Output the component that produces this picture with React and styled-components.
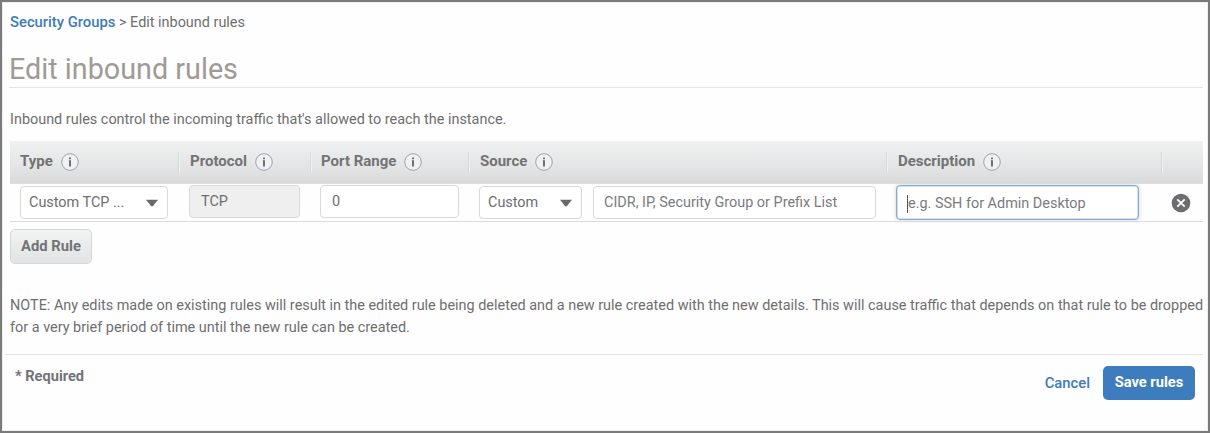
import React from "react";
import styled, { createGlobalStyle } from "styled-components";

const Global = createGlobalStyle`
  * { box-sizing: border-box; }
  body { margin: 0; background: #fff; }
`;

const Page = styled.main`
  width: 1210px;
  height: 433px;
  padding: 9px 5px 0 3px;
  border: 2px solid #7a7a7b;
  background: #fefefe;
  box-shadow: inset 0 0 0 1px #efefef;
  overflow: hidden;
  color: #6e6e70;
  font: 400 14.43px/21.5px Roboto, "Liberation Sans", sans-serif;
`;

const Section = styled.div`
  margin-left: 4px;
`;

const Breadcrumb = styled.nav`
  height: 21px;
  padding: 1px 0 0 1px;
  line-height: 21px;
`;

const Link = styled.a`
  color: #3d7bbb;
  font-size: 14.8px;
  font-weight: 500;
`;

const Title = styled.h1`
  height: 56px;
  margin: 0;
  padding: 17px 0 0 0;
  border-bottom: 1px solid #e4e4e4;
  color: #a09a95;
  font-size: 28.75px;
  font-weight: 400;
  line-height: 40px;
`;

const Intro = styled.p`
  height: 53px;
  margin: 0;
  padding: 21px 0 0 1px;
  white-space: nowrap;
`;

const Table = styled.div`
  margin-left: 1px;
`;

const Columns = styled.div`
  display: grid;
  grid-template-columns: 168px 132px 158px 418px 275px 1fr;
`;

const HeaderRow = styled(Columns)`
  height: 43px;
  align-items: center;
  background: linear-gradient(#eff0f0, #e5e6e7 55%, #dadada);
  border-bottom: 1px solid #dedede;
`;

const HeaderCell = styled.div`
  display: flex;
  align-items: center;
  gap: 8px;
  height: 20px;
  padding-left: ${(p) => p.$inset}px;
  border-left: ${(p) => (p.$first ? "0" : "1px solid #d6d7d8")};
  box-shadow: ${(p) => (p.$first ? "none" : "inset 1px 0 #f1f2f2")};
  font-size: 15px;
  font-weight: 700;
  color: #737375;
`;

const Row = styled(Columns)`
  height: 38px;
  border-bottom: 1px solid #dbdbdb;
`;

const Cell = styled.div`
  display: flex;
  align-items: flex-start;
  gap: 11px;
  padding: ${(p) => p.$top}px 0 0 ${(p) => p.$left || 10}px;
`;

const Field = styled.div`
  display: flex;
  align-items: center;
  justify-content: space-between;
  width: ${(p) => p.$width}px;
  height: 33px;
  padding: 0 ${(p) => (p.$select ? 9 : 11)}px 0 ${(p) => (p.$select ? 8 : 11)}px;
  border: 1px solid #d9d9da;
  border-radius: 4px;
  background: ${(p) => (p.$disabled ? "#efefef" : "#fff")};
  white-space: nowrap;
`;

const Input = styled.input`
  width: ${(p) => p.$width}px;
  height: 33px;
  padding: 0 10px;
  border: 1px solid #d9d9da;
  border-radius: 4px;
  outline: 0;
  background: #fff;
  color: #6e6e70;
  font: inherit;
  &::placeholder { color: #7b7b7e; opacity: 1; }
`;

const ActiveInput = styled.div`
  display: flex;
  align-items: center;
  width: 243px;
  height: 35px;
  padding: 2px 10px 0;
  border: 1px solid #86acd6;
  border-radius: 4px;
  background: #fff;
  box-shadow: inset 0 0 0 0.5px #a9c3e0, 0 0 4px #cdd3da;
  color: #7b7b7e;
`;

const Caret = styled.span`
  width: 1px;
  height: 18px;
  background: #555;
`;

const AddButton = styled.button`
  display: block;
  width: 82px;
  height: 35px;
  margin: 7px 0 0 0;
  padding: 0;
  border: 1px solid #d5d6d7;
  border-radius: 5px;
  background: linear-gradient(#f2f3f3, #e1e3e4);
  color: #737375;
  font: inherit;
  font-size: 14.8px;
  font-weight: 700;
`;

const Note = styled.p`
  margin: 31px 0 0 5px;
  height: 59px;
  white-space: nowrap;
`;

const Footer = styled.footer`
  display: flex;
  align-items: flex-start;
  height: 70px;
  padding: 11px 8px 0 10px;
  border-top: 1px solid #e4e4e4;
`;

const Required = styled.strong`
  flex: 1;
  color: #737375;
  font-size: 14.6px;
  font-weight: 700;
`;

const Cancel = styled(Link)`
  margin: 7px 13px 0 0;
`;

const SaveButton = styled.button`
  width: 92px;
  height: 34px;
  padding: 0;
  border: 0;
  border-radius: 5px;
  background: #3d7cbd;
  color: #fff;
  font: inherit;
  font-size: 14.7px;
  font-weight: 700;
`;

const InfoIcon = () => (
  <svg width="18" height="18" viewBox="0 0 18 18">
    <circle cx="9" cy="9" r="8.3" fill="#f0f1f2" stroke="#98a4b2" strokeWidth="1" />
    <path d="M9 7.2v6.2M9 4.4v1.8" fill="none" stroke="#707072" strokeWidth="2" />
    <path d="M7.7 7.6H9" fill="none" stroke="#8a8a8c" strokeWidth="0.8" />
  </svg>
);

const Arrow = () => (
  <svg width="12" height="8" viewBox="0 0 12 8">
    <path d="M0 .7h12L7.2 6.8Q6 8 4.8 6.8Z" fill="#69696b" />
  </svg>
);

const RemoveIcon = () => (
  <svg width="20" height="20" viewBox="0 0 20 20">
    <circle cx="10" cy="10" r="9.3" fill="#6d6d6f" />
    <path d="M6.3 6.3l7.4 7.4M13.7 6.3l-7.4 7.4" stroke="#fff" strokeWidth="1.8" />
  </svg>
);

const headings = [
  { label: "Type", inset: 10 },
  { label: "Protocol", inset: 11 },
  { label: "Port Range", inset: 10 },
  { label: "Source", inset: 11 },
  { label: "Description", inset: 11 },
];

export default function App() {
  return (
    <Page>
      <Global />
      <Section>
        <Breadcrumb><Link>Security Groups</Link> &gt; Edit inbound rules</Breadcrumb>
        <Title>Edit inbound rules</Title>
        <Intro>Inbound rules control the incoming traffic that's allowed to reach the instance.</Intro>
        <Table>
          <HeaderRow>
            {headings.map(({ label, inset }, i) => (
              <HeaderCell key={label} $first={i === 0} $inset={inset}>{label}<InfoIcon /></HeaderCell>
            ))}
            <HeaderCell $inset={0} />
          </HeaderRow>
          <Row>
            <Cell $top={2}><Field $select $width={148}>Custom TCP ...<Arrow /></Field></Cell>
            <Cell $top={1} $left={11}><Field $disabled $width={111}>TCP</Field></Cell>
            <Cell $top={1}><Field $width={139}>0</Field></Cell>
            <Cell $top={2} $left={11}>
              <Field $select $width={103}>Custom<Arrow /></Field>
              <Input $width={283} placeholder="CIDR, IP, Security Group or Prefix List" />
            </Cell>
            <Cell $top={1}><ActiveInput><Caret />e.g. SSH for Admin Desktop</ActiveInput></Cell>
            <Cell $top={9}><RemoveIcon /></Cell>
          </Row>
          <AddButton>Add Rule</AddButton>
        </Table>
      </Section>
      <Note>
        NOTE: Any edits made on existing rules will result in the edited rule being deleted and a new rule created with the new details. This will cause traffic that depends on that rule to be dropped<br />
        for a very brief period of time until the new rule can be created.
      </Note>
      <Footer>
        <Required>* Required</Required>
        <Cancel>Cancel</Cancel>
        <SaveButton>Save rules</SaveButton>
      </Footer>
    </Page>
  );
}
